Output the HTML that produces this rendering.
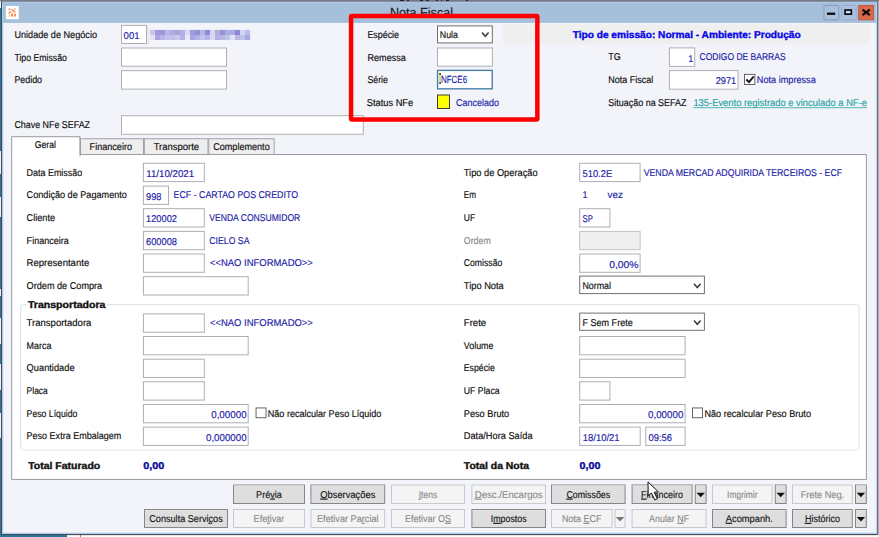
<!DOCTYPE html>
<html lang="pt-BR">
<head>
<meta charset="utf-8">
<title>Nota Fiscal</title>
<style>
html,body{margin:0;padding:0;background:#f2f4fa;overflow:hidden}
body{width:879px;height:537px;position:relative}
svg{display:block;position:absolute;left:0;top:0}
svg text.b{stroke-width:0.35px}
svg text{font-family:'Liberation Sans', Arial, sans-serif;font-size:9.9px;white-space:pre;stroke-width:0.15px;text-rendering:geometricPrecision}
</style>
</head>
<body>
<svg width="879" height="537" viewBox="0 0 879 537" role="img" aria-label="Nota Fiscal">
<rect x="0.00" y="0.00" width="879.00" height="537.00" fill="#f2f4fa" />
<rect x="0.00" y="0.00" width="1.00" height="537.00" fill="#2a7599" />
<rect x="0.00" y="0.00" width="1.00" height="8.00" fill="#eceffa" />
<rect x="0.00" y="151.00" width="1.00" height="23.00" fill="#eceffa" />
<rect x="0.00" y="197.00" width="1.00" height="20.00" fill="#eceffa" />
<rect x="0.00" y="289.00" width="1.00" height="7.00" fill="#eceffa" />
<rect x="0.00" y="318.00" width="1.00" height="26.00" fill="#eceffa" />
<rect x="0.00" y="364.00" width="1.00" height="26.00" fill="#eceffa" />
<rect x="0.00" y="413.00" width="1.00" height="25.00" fill="#eceffa" />
<rect x="1.00" y="1.00" width="877.00" height="534.00" fill="#454a55" />
<rect x="2.00" y="2.00" width="875.00" height="532.00" fill="#b0cdee" />
<rect x="3.00" y="3.00" width="873.00" height="530.00" fill="#dfe6f3" />
<rect x="4.00" y="3.00" width="871.00" height="529.00" fill="#f8f7fc" />
<rect x="5.00" y="3.00" width="870.00" height="528.00" fill="#f2f4fa" />
<rect x="875.00" y="3.00" width="1.00" height="529.00" fill="#eceef8" />
<rect x="876.00" y="2.00" width="1.00" height="532.00" fill="#bcd5f0" />
<rect x="877.00" y="1.00" width="1.00" height="534.00" fill="#66748a" />
<rect x="878.00" y="0.00" width="1.00" height="537.00" fill="#b0aeab" />
<rect x="2.00" y="2.00" width="875.00" height="1.00" fill="#adc8e6" />
<rect x="3.00" y="3.00" width="873.00" height="19.90" fill="#a6c0dc" />
<rect x="0.00" y="0.00" width="879.00" height="1.00" fill="#7a7a7e" />
<rect x="2.00" y="1.00" width="875.00" height="1.00" fill="#7f8fa8" />
<rect x="400.00" y="0.00" width="4.00" height="0.90" fill="#1a1a1a" />
<rect x="407.00" y="0.00" width="2.00" height="0.90" fill="#1a1a1a" />
<rect x="420.00" y="0.00" width="3.00" height="0.90" fill="#1a1a1a" />
<rect x="426.00" y="0.00" width="3.00" height="0.90" fill="#1a1a1a" />
<rect x="436.00" y="0.00" width="2.00" height="0.90" fill="#1a1a1a" />
<rect x="441.00" y="0.00" width="1.00" height="0.90" fill="#1a1a1a" />
<rect x="446.00" y="0.00" width="3.00" height="0.90" fill="#1a1a1a" />
<rect x="466.00" y="0.00" width="2.00" height="0.90" fill="#1a1a1a" />
<rect x="0.00" y="535.00" width="879.00" height="2.00" fill="#2a7599" />
<rect x="67.00" y="535.00" width="812.00" height="1.00" fill="#e8e8e6" />
<rect x="67.00" y="536.00" width="812.00" height="1.00" fill="#ffffff" />
<rect x="80.00" y="535.00" width="0.80" height="2.00" fill="#666" />
<text x="390.00" y="17.30" fill="#1b1b26" stroke="#1b1b26" textLength="63.00" lengthAdjust="spacingAndGlyphs" style="font-size:13.2px">Nota Fiscal</text>
<rect x="5.90" y="6.00" width="12.90" height="13.20" fill="#ffffff" rx="0.8" />
<g fill="#ff6a1a" stroke="#ff6a1a" stroke-linecap="round" opacity="0.92"><circle cx="9.4" cy="9.2" r="0.85" stroke="none"/><circle cx="14.9" cy="9.0" r="0.85" stroke="none" opacity="0.8"/><line x1="12.0" y1="9.7" x2="14.9" y2="11.9" stroke-width="1.3"/><line x1="10.3" y1="11.6" x2="9.2" y2="13.2" stroke-width="1.3"/><circle cx="9.4" cy="15.9" r="0.7" stroke="none" opacity="0.85"/><line x1="12.0" y1="14.1" x2="12.1" y2="16.0" stroke-width="1.7" opacity="0.9"/><line x1="15.0" y1="14.4" x2="15.1" y2="16.0" stroke-width="1.7" opacity="0.9"/><circle cx="12.3" cy="12.6" r="0.6" stroke="none" opacity="0.5"/></g>
<rect x="823.95" y="5.45" width="14.80" height="14.40" fill="#a9c1de" stroke="#7f97b6" stroke-width="0.9" rx="1.2" />
<rect x="827.00" y="12.60" width="8.20" height="2.30" fill="#0a0a0a" />
<rect x="841.75" y="5.45" width="14.40" height="14.40" fill="#a9c1de" stroke="#95abc8" stroke-width="0.9" rx="1.2" />
<rect x="845.05" y="10.05" width="6.30" height="4.10" fill="#cddff3" stroke="#0a0a0a" stroke-width="1.7" />
<rect x="858.75" y="5.45" width="14.80" height="14.40" fill="#d9694c" stroke="#c5502f" stroke-width="0.9" />
<path d="M862.4 9.6 L869.8 15.2 M869.8 9.6 L862.4 15.2" fill="none" stroke="#0a0a0a" stroke-width="2.1" />
<text x="14.40" y="37.90" fill="#0c0c0c" stroke="#0c0c0c" textLength="82.60" lengthAdjust="spacingAndGlyphs">Unidade de Negócio</text>
<text x="14.40" y="60.60" fill="#0c0c0c" stroke="#0c0c0c" textLength="52.50" lengthAdjust="spacingAndGlyphs">Tipo Emissão</text>
<text x="14.40" y="83.20" fill="#0c0c0c" stroke="#0c0c0c" textLength="27.60" lengthAdjust="spacingAndGlyphs">Pedido</text>
<text x="14.40" y="128.20" fill="#0c0c0c" stroke="#0c0c0c" textLength="75.60" lengthAdjust="spacingAndGlyphs">Chave NFe SEFAZ</text>
<rect x="121.50" y="25.40" width="25.00" height="18.10" fill="#ffffff" stroke="#adafb5" stroke-width="1.0" />
<text x="123.60" y="38.90" fill="#1c1ca8" stroke="#1c1ca8" textLength="15.90" lengthAdjust="spacingAndGlyphs">001</text>
<rect x="147.00" y="27.00" width="2.50" height="17.40" fill="#e9e9ef" />
<rect x="150.00" y="29.90" width="5.05" height="5.10" fill="#cbc5ea" />
<rect x="150.00" y="35.00" width="5.05" height="5.00" fill="#e2e0f4" />
<rect x="155.00" y="29.90" width="5.05" height="5.10" fill="#9f98dd" />
<rect x="155.00" y="35.00" width="5.05" height="5.00" fill="#aaa5e0" />
<rect x="160.00" y="29.90" width="5.05" height="5.10" fill="#9f98dd" />
<rect x="160.00" y="35.00" width="5.05" height="5.00" fill="#bab6e5" />
<rect x="165.00" y="29.90" width="5.05" height="5.10" fill="#b9b8e6" />
<rect x="165.00" y="35.00" width="5.05" height="5.00" fill="#c3c2ea" />
<rect x="170.00" y="29.90" width="5.05" height="5.10" fill="#b0aee3" />
<rect x="170.00" y="35.00" width="5.05" height="5.00" fill="#c0c1ea" />
<rect x="175.00" y="29.90" width="5.05" height="5.10" fill="#a9a4e0" />
<rect x="175.00" y="35.00" width="5.05" height="5.00" fill="#cdc9ec" />
<rect x="180.00" y="29.90" width="5.05" height="5.10" fill="#b3b2e5" />
<rect x="180.00" y="35.00" width="5.05" height="5.00" fill="#b0b3e6" />
<rect x="185.00" y="29.90" width="5.05" height="5.10" fill="#dad8f0" />
<rect x="185.00" y="35.00" width="5.05" height="5.00" fill="#e9e8f6" />
<rect x="190.00" y="29.90" width="5.05" height="5.10" fill="#9d9cdc" />
<rect x="190.00" y="35.00" width="5.05" height="5.00" fill="#a8a6e0" />
<rect x="195.00" y="29.90" width="5.05" height="5.10" fill="#958fd9" />
<rect x="195.00" y="35.00" width="5.05" height="5.00" fill="#b5b3e5" />
<rect x="200.00" y="29.90" width="5.05" height="5.10" fill="#b6b5e3" />
<rect x="200.00" y="35.00" width="5.05" height="5.00" fill="#c0c0e9" />
<rect x="205.00" y="29.90" width="5.05" height="5.10" fill="#8a8bdb" />
<rect x="205.00" y="35.00" width="5.05" height="5.00" fill="#b2b5e8" />
<rect x="210.00" y="29.90" width="5.05" height="5.10" fill="#d9d6f0" />
<rect x="210.00" y="35.00" width="5.05" height="5.00" fill="#dad7f0" />
<rect x="215.00" y="29.90" width="5.05" height="5.10" fill="#b1addf" />
<rect x="215.00" y="35.00" width="5.05" height="5.00" fill="#b5b2e3" />
<rect x="220.00" y="29.90" width="5.05" height="5.10" fill="#9893d9" />
<rect x="220.00" y="35.00" width="5.05" height="5.00" fill="#b7b6e5" />
<rect x="225.00" y="29.90" width="5.05" height="5.10" fill="#a9aee4" />
<rect x="225.00" y="35.00" width="5.05" height="5.00" fill="#c0c5ec" />
<rect x="230.00" y="29.90" width="5.05" height="5.10" fill="#aaa7e1" />
<rect x="230.00" y="35.00" width="5.05" height="5.00" fill="#e2e2f5" />
<rect x="235.00" y="29.90" width="5.05" height="5.10" fill="#8e88d8" />
<rect x="235.00" y="35.00" width="5.05" height="5.00" fill="#bcb6e5" />
<rect x="240.00" y="29.90" width="5.05" height="5.10" fill="#d3d3ef" />
<rect x="240.00" y="35.00" width="5.05" height="5.00" fill="#bfc1ea" />
<rect x="245.00" y="29.90" width="5.05" height="5.10" fill="#b5c0ea" />
<rect x="245.00" y="35.00" width="5.05" height="5.00" fill="#a9a8e1" />
<rect x="121.50" y="48.00" width="105.00" height="18.20" fill="#ffffff" stroke="#adafb5" stroke-width="1.0" />
<rect x="121.50" y="70.70" width="105.00" height="18.40" fill="#ffffff" stroke="#adafb5" stroke-width="1.0" />
<rect x="121.50" y="115.70" width="241.80" height="18.60" fill="#ffffff" stroke="#adafb5" stroke-width="1.0" />
<text x="367.40" y="37.90" fill="#0c0c0c" stroke="#0c0c0c" textLength="31.60" lengthAdjust="spacingAndGlyphs">Espécie</text>
<text x="367.40" y="60.60" fill="#0c0c0c" stroke="#0c0c0c" textLength="38.50" lengthAdjust="spacingAndGlyphs">Remessa</text>
<text x="367.40" y="83.20" fill="#0c0c0c" stroke="#0c0c0c" textLength="20.50" lengthAdjust="spacingAndGlyphs">Série</text>
<text x="366.80" y="106.00" fill="#0c0c0c" stroke="#0c0c0c" textLength="46.40" lengthAdjust="spacingAndGlyphs">Status NFe</text>
<rect x="503.00" y="24.60" width="366.80" height="19.60" fill="#efefef" />
<rect x="437.50" y="25.90" width="54.80" height="17.00" fill="#ffffff" stroke="#6f6f6f" stroke-width="1.0" />
<text x="439.80" y="38.00" fill="#0c0c0c" stroke="#0c0c0c" textLength="18.20" lengthAdjust="spacingAndGlyphs">Nula</text>
<path d="M482.0 32.5 L485.3 36.3 L488.6 32.5" fill="none" stroke="#3a3a3a" stroke-width="1.5" />
<rect x="437.50" y="48.00" width="54.90" height="18.20" fill="#ffffff" stroke="#adafb5" stroke-width="1.0" />
<rect x="437.57" y="70.38" width="54.65" height="18.45" fill="#ffffff" stroke="#457dab" stroke-width="1.35" />
<rect x="439.30" y="73.00" width="1.60" height="10.90" fill="#c9d86a" />
<rect x="439.30" y="73.00" width="1.60" height="1.80" fill="#333" />
<rect x="439.30" y="82.20" width="1.60" height="1.70" fill="#333" />
<text x="440.90" y="82.55" fill="#1c1ca8" stroke="#1c1ca8" textLength="26.20" lengthAdjust="spacingAndGlyphs" style="font-size:10.4px">NFCE6</text>
<rect x="436.20" y="93.80" width="14.60" height="15.90" fill="#fbfbfe" />
<rect x="437.50" y="95.00" width="12.00" height="13.50" fill="#ffff00" stroke="#3a3a3a" stroke-width="1.0" />
<text x="455.90" y="105.60" fill="#1c1ca8" stroke="#1c1ca8" textLength="43.00" lengthAdjust="spacingAndGlyphs">Cancelado</text>
<text x="572.70" y="38.00" fill="#0505e6" stroke="#0505e6" textLength="228.00" lengthAdjust="spacingAndGlyphs" font-weight="bold" class="b">Tipo de emissão: Normal - Ambiente: Produção</text>
<text x="608.30" y="60.40" fill="#0c0c0c" stroke="#0c0c0c" textLength="12.50" lengthAdjust="spacingAndGlyphs">TG</text>
<text x="608.30" y="83.00" fill="#0c0c0c" stroke="#0c0c0c" textLength="45.00" lengthAdjust="spacingAndGlyphs">Nota Fiscal</text>
<text x="608.30" y="106.20" fill="#0c0c0c" stroke="#0c0c0c" textLength="78.20" lengthAdjust="spacingAndGlyphs">Situação na SEFAZ</text>
<rect x="669.40" y="47.90" width="25.30" height="18.50" fill="#ffffff" stroke="#adafb5" stroke-width="1.0" />
<text x="693.20" y="61.60" fill="#1c1ca8" stroke="#1c1ca8" textLength="4.95" lengthAdjust="spacingAndGlyphs" text-anchor="end">1</text>
<text x="699.60" y="60.40" fill="#1c1ca8" stroke="#1c1ca8" textLength="86.00" lengthAdjust="spacingAndGlyphs">CODIGO DE BARRAS</text>
<rect x="669.40" y="70.60" width="68.60" height="18.60" fill="#ffffff" stroke="#adafb5" stroke-width="1.0" />
<text x="736.20" y="84.30" fill="#1c1ca8" stroke="#1c1ca8" textLength="20.50" lengthAdjust="spacingAndGlyphs" text-anchor="end">2971</text>
<rect x="744.55" y="74.35" width="10.30" height="10.10" fill="#ffffff" stroke="#555" stroke-width="0.9" />
<path d="M746.3 79.5 L749.1 82.2 L753.6 76.5" fill="none" stroke="#111" stroke-width="1.9" />
<text x="756.80" y="82.90" fill="#1c1ca8" stroke="#1c1ca8" textLength="59.00" lengthAdjust="spacingAndGlyphs">Nota impressa</text>
<text x="693.40" y="106.20" fill="#27a3a3" stroke="#27a3a3" textLength="173.60" lengthAdjust="spacingAndGlyphs">135-Evento registrado e vinculado a NF-e</text>
<line x1="693.40" y1="107.70" x2="867.00" y2="107.70" stroke="#27a3a3" stroke-width="0.8" />
<rect x="11.70" y="154.50" width="854.70" height="324.90" fill="#ffffff" stroke="#979aa3" stroke-width="1.0" />
<rect x="80.45" y="138.75" width="63.00" height="15.70" fill="#eeeeee" stroke="#979aa3" stroke-width="0.9" />
<text x="89.60" y="150.10" fill="#0c0c0c" stroke="#0c0c0c" textLength="42.40" lengthAdjust="spacingAndGlyphs">Financeiro</text>
<rect x="144.35" y="138.75" width="63.60" height="15.70" fill="#eeeeee" stroke="#979aa3" stroke-width="0.9" />
<text x="153.70" y="150.10" fill="#0c0c0c" stroke="#0c0c0c" textLength="45.40" lengthAdjust="spacingAndGlyphs">Transporte</text>
<rect x="208.85" y="138.75" width="65.30" height="15.70" fill="#eeeeee" stroke="#979aa3" stroke-width="0.9" />
<text x="213.20" y="150.10" fill="#0c0c0c" stroke="#0c0c0c" textLength="56.50" lengthAdjust="spacingAndGlyphs">Complemento</text>
<rect x="11.70" y="136.70" width="68.20" height="19.30" fill="#ffffff" stroke="#979aa3" stroke-width="1.0" />
<rect x="12.20" y="153.80" width="67.20" height="3.40" fill="#ffffff" />
<text x="34.70" y="148.40" fill="#0c0c0c" stroke="#0c0c0c" textLength="21.30" lengthAdjust="spacingAndGlyphs">Geral</text>
<text x="26.60" y="175.50" fill="#0c0c0c" stroke="#0c0c0c" textLength="55.60" lengthAdjust="spacingAndGlyphs">Data Emissão</text>
<text x="26.60" y="198.30" fill="#0c0c0c" stroke="#0c0c0c" textLength="100.30" lengthAdjust="spacingAndGlyphs">Condição de Pagamento</text>
<text x="26.60" y="220.90" fill="#0c0c0c" stroke="#0c0c0c" textLength="28.40" lengthAdjust="spacingAndGlyphs">Cliente</text>
<text x="26.60" y="243.60" fill="#0c0c0c" stroke="#0c0c0c" textLength="42.30" lengthAdjust="spacingAndGlyphs">Financeira</text>
<text x="26.60" y="266.20" fill="#0c0c0c" stroke="#0c0c0c" textLength="62.60" lengthAdjust="spacingAndGlyphs">Representante</text>
<text x="26.60" y="288.90" fill="#0c0c0c" stroke="#0c0c0c" textLength="75.60" lengthAdjust="spacingAndGlyphs">Ordem de Compra</text>
<rect x="143.40" y="163.30" width="60.90" height="18.30" fill="#ffffff" stroke="#adafb5" stroke-width="1.0" />
<text x="146.20" y="176.80" fill="#1c1ca8" stroke="#1c1ca8" textLength="48.00" lengthAdjust="spacingAndGlyphs">11/10/2021</text>
<rect x="143.40" y="186.10" width="25.10" height="18.30" fill="#ffffff" stroke="#adafb5" stroke-width="1.0" />
<text x="146.00" y="199.60" fill="#1c1ca8" stroke="#1c1ca8" textLength="15.40" lengthAdjust="spacingAndGlyphs">998</text>
<text x="173.60" y="198.30" fill="#1c1ca8" stroke="#1c1ca8" textLength="124.40" lengthAdjust="spacingAndGlyphs">ECF - CARTAO POS CREDITO</text>
<rect x="143.40" y="208.70" width="60.90" height="18.30" fill="#ffffff" stroke="#adafb5" stroke-width="1.0" />
<text x="146.00" y="222.20" fill="#1c1ca8" stroke="#1c1ca8" textLength="31.00" lengthAdjust="spacingAndGlyphs">120002</text>
<text x="209.30" y="220.90" fill="#1c1ca8" stroke="#1c1ca8" textLength="91.00" lengthAdjust="spacingAndGlyphs">VENDA CONSUMIDOR</text>
<rect x="143.40" y="231.40" width="60.90" height="18.30" fill="#ffffff" stroke="#adafb5" stroke-width="1.0" />
<text x="146.00" y="244.90" fill="#1c1ca8" stroke="#1c1ca8" textLength="31.00" lengthAdjust="spacingAndGlyphs">600008</text>
<text x="209.30" y="243.60" fill="#1c1ca8" stroke="#1c1ca8" textLength="40.20" lengthAdjust="spacingAndGlyphs">CIELO SA</text>
<rect x="143.40" y="254.00" width="60.90" height="18.30" fill="#ffffff" stroke="#adafb5" stroke-width="1.0" />
<text x="209.90" y="266.20" fill="#1c1ca8" stroke="#1c1ca8" textLength="103.00" lengthAdjust="spacingAndGlyphs">&lt;&lt;NAO INFORMADO&gt;&gt;</text>
<rect x="143.40" y="276.70" width="104.80" height="18.30" fill="#ffffff" stroke="#adafb5" stroke-width="1.0" />
<text x="463.80" y="175.50" fill="#0c0c0c" stroke="#0c0c0c" textLength="73.80" lengthAdjust="spacingAndGlyphs">Tipo de Operação</text>
<text x="463.80" y="198.30" fill="#0c0c0c" stroke="#0c0c0c" textLength="12.30" lengthAdjust="spacingAndGlyphs">Em</text>
<text x="463.80" y="220.90" fill="#0c0c0c" stroke="#0c0c0c" textLength="11.40" lengthAdjust="spacingAndGlyphs">UF</text>
<text x="463.80" y="243.60" fill="#8a8a8a" stroke="#8a8a8a" textLength="27.00" lengthAdjust="spacingAndGlyphs">Ordem</text>
<text x="463.80" y="266.20" fill="#0c0c0c" stroke="#0c0c0c" textLength="38.50" lengthAdjust="spacingAndGlyphs">Comissão</text>
<text x="463.80" y="288.90" fill="#0c0c0c" stroke="#0c0c0c" textLength="40.00" lengthAdjust="spacingAndGlyphs">Tipo Nota</text>
<rect x="579.70" y="163.30" width="60.40" height="18.30" fill="#ffffff" stroke="#adafb5" stroke-width="1.0" />
<text x="582.60" y="176.80" fill="#1c1ca8" stroke="#1c1ca8" textLength="29.50" lengthAdjust="spacingAndGlyphs">510.2E</text>
<text x="643.70" y="175.50" fill="#1c1ca8" stroke="#1c1ca8" textLength="198.40" lengthAdjust="spacingAndGlyphs">VENDA MERCAD ADQUIRIDA TERCEIROS - ECF</text>
<text x="582.60" y="198.30" fill="#1c1ca8" stroke="#1c1ca8" textLength="4.95" lengthAdjust="spacingAndGlyphs">1</text>
<text x="607.60" y="198.30" fill="#1c1ca8" stroke="#1c1ca8" textLength="15.40" lengthAdjust="spacingAndGlyphs">vez</text>
<rect x="579.70" y="208.70" width="30.20" height="18.30" fill="#ffffff" stroke="#adafb5" stroke-width="1.0" />
<text x="582.60" y="222.20" fill="#1c1ca8" stroke="#1c1ca8" textLength="10.30" lengthAdjust="spacingAndGlyphs">SP</text>
<rect x="579.70" y="231.40" width="60.40" height="18.30" fill="#efefef" stroke="#c4c4c4" stroke-width="1.0" />
<rect x="579.70" y="254.00" width="60.40" height="18.30" fill="#ffffff" stroke="#adafb5" stroke-width="1.0" />
<text x="638.60" y="267.50" fill="#1c1ca8" stroke="#1c1ca8" textLength="29.40" lengthAdjust="spacingAndGlyphs" text-anchor="end">0,00%</text>
<rect x="579.70" y="276.10" width="124.70" height="17.50" fill="#ffffff" stroke="#707070" stroke-width="1.0" />
<text x="582.40" y="288.90" fill="#0c0c0c" stroke="#0c0c0c" textLength="28.50" lengthAdjust="spacingAndGlyphs">Normal</text>
<path d="M694.0 283.8 L697.3 287.6 L700.6 283.8" fill="none" stroke="#3a3a3a" stroke-width="1.5" />
<rect x="20.65" y="304.65" width="838.50" height="145.50" fill="none" stroke="#d8dfe8" stroke-width="0.9" rx="2.5" />
<rect x="26.50" y="299.00" width="80.50" height="11.00" fill="#ffffff" />
<text x="27.90" y="308.00" fill="#111" stroke="#111" textLength="77.60" lengthAdjust="spacingAndGlyphs" font-weight="bold" class="b">Transportadora</text>
<text x="26.60" y="326.10" fill="#0c0c0c" stroke="#0c0c0c" textLength="64.80" lengthAdjust="spacingAndGlyphs">Transportadora</text>
<text x="26.60" y="348.70" fill="#0c0c0c" stroke="#0c0c0c" textLength="24.80" lengthAdjust="spacingAndGlyphs">Marca</text>
<text x="26.60" y="371.40" fill="#0c0c0c" stroke="#0c0c0c" textLength="48.00" lengthAdjust="spacingAndGlyphs">Quantidade</text>
<text x="26.60" y="394.00" fill="#0c0c0c" stroke="#0c0c0c" textLength="21.20" lengthAdjust="spacingAndGlyphs">Placa</text>
<text x="26.60" y="416.70" fill="#0c0c0c" stroke="#0c0c0c" textLength="50.80" lengthAdjust="spacingAndGlyphs">Peso Líquido</text>
<text x="26.60" y="439.30" fill="#0c0c0c" stroke="#0c0c0c" textLength="94.60" lengthAdjust="spacingAndGlyphs">Peso Extra Embalagem</text>
<rect x="143.40" y="313.90" width="60.90" height="18.30" fill="#ffffff" stroke="#adafb5" stroke-width="1.0" />
<text x="209.90" y="326.10" fill="#1c1ca8" stroke="#1c1ca8" textLength="103.00" lengthAdjust="spacingAndGlyphs">&lt;&lt;NAO INFORMADO&gt;&gt;</text>
<rect x="143.40" y="336.50" width="104.80" height="18.30" fill="#ffffff" stroke="#adafb5" stroke-width="1.0" />
<rect x="143.40" y="359.20" width="60.90" height="18.30" fill="#ffffff" stroke="#adafb5" stroke-width="1.0" />
<rect x="143.40" y="381.80" width="60.90" height="18.30" fill="#ffffff" stroke="#adafb5" stroke-width="1.0" />
<rect x="143.40" y="404.50" width="104.80" height="18.30" fill="#ffffff" stroke="#adafb5" stroke-width="1.0" />
<text x="246.60" y="418.00" fill="#1c1ca8" stroke="#1c1ca8" textLength="35.40" lengthAdjust="spacingAndGlyphs" text-anchor="end">0,00000</text>
<rect x="143.40" y="427.10" width="104.80" height="18.30" fill="#ffffff" stroke="#adafb5" stroke-width="1.0" />
<text x="246.60" y="440.60" fill="#1c1ca8" stroke="#1c1ca8" textLength="40.60" lengthAdjust="spacingAndGlyphs" text-anchor="end">0,000000</text>
<rect x="256.05" y="407.95" width="10.00" height="9.80" fill="#ffffff" stroke="#555" stroke-width="0.9" />
<text x="267.80" y="416.70" fill="#0c0c0c" stroke="#0c0c0c" textLength="113.60" lengthAdjust="spacingAndGlyphs">Não recalcular Peso Líquido</text>
<text x="463.80" y="326.10" fill="#0c0c0c" stroke="#0c0c0c" textLength="22.40" lengthAdjust="spacingAndGlyphs">Frete</text>
<text x="463.80" y="348.70" fill="#0c0c0c" stroke="#0c0c0c" textLength="29.60" lengthAdjust="spacingAndGlyphs">Volume</text>
<text x="463.80" y="371.40" fill="#0c0c0c" stroke="#0c0c0c" textLength="31.00" lengthAdjust="spacingAndGlyphs">Espécie</text>
<text x="463.80" y="394.00" fill="#0c0c0c" stroke="#0c0c0c" textLength="35.80" lengthAdjust="spacingAndGlyphs">UF Placa</text>
<text x="463.80" y="416.70" fill="#0c0c0c" stroke="#0c0c0c" textLength="45.40" lengthAdjust="spacingAndGlyphs">Peso Bruto</text>
<text x="463.80" y="439.30" fill="#0c0c0c" stroke="#0c0c0c" textLength="68.80" lengthAdjust="spacingAndGlyphs">Data/Hora Saída</text>
<rect x="579.70" y="313.10" width="124.70" height="17.20" fill="#ffffff" stroke="#707070" stroke-width="1.0" />
<text x="582.40" y="326.10" fill="#0c0c0c" stroke="#0c0c0c" textLength="50.40" lengthAdjust="spacingAndGlyphs">F Sem Frete</text>
<path d="M694.0 320.5 L697.3 324.3 L700.6 320.5" fill="none" stroke="#3a3a3a" stroke-width="1.5" />
<rect x="579.70" y="336.50" width="105.40" height="18.30" fill="#ffffff" stroke="#adafb5" stroke-width="1.0" />
<rect x="579.70" y="359.20" width="105.40" height="18.30" fill="#ffffff" stroke="#adafb5" stroke-width="1.0" />
<rect x="579.70" y="381.80" width="30.20" height="18.30" fill="#ffffff" stroke="#adafb5" stroke-width="1.0" />
<rect x="579.70" y="404.50" width="105.40" height="18.30" fill="#ffffff" stroke="#adafb5" stroke-width="1.0" />
<text x="683.40" y="418.00" fill="#1c1ca8" stroke="#1c1ca8" textLength="35.40" lengthAdjust="spacingAndGlyphs" text-anchor="end">0,00000</text>
<rect x="579.70" y="427.10" width="60.50" height="18.30" fill="#ffffff" stroke="#adafb5" stroke-width="1.0" />
<text x="582.80" y="440.60" fill="#1c1ca8" stroke="#1c1ca8" textLength="36.80" lengthAdjust="spacingAndGlyphs">18/10/21</text>
<rect x="645.80" y="427.10" width="39.30" height="18.30" fill="#ffffff" stroke="#adafb5" stroke-width="1.0" />
<text x="648.40" y="440.60" fill="#1c1ca8" stroke="#1c1ca8" textLength="23.60" lengthAdjust="spacingAndGlyphs">09:56</text>
<rect x="692.45" y="407.95" width="10.10" height="9.80" fill="#ffffff" stroke="#555" stroke-width="0.9" />
<text x="704.40" y="416.70" fill="#0c0c0c" stroke="#0c0c0c" textLength="106.60" lengthAdjust="spacingAndGlyphs">Não recalcular Peso Bruto</text>
<text x="28.20" y="468.80" fill="#111" stroke="#111" textLength="72.00" lengthAdjust="spacingAndGlyphs" font-weight="bold" class="b">Total Faturado</text>
<text x="143.20" y="468.80" fill="#0a0a96" stroke="#0a0a96" textLength="21.00" lengthAdjust="spacingAndGlyphs" font-weight="bold" class="b">0,00</text>
<text x="463.80" y="468.80" fill="#111" stroke="#111" textLength="65.20" lengthAdjust="spacingAndGlyphs" font-weight="bold" class="b">Total da Nota</text>
<text x="579.40" y="468.80" fill="#0a0a96" stroke="#0a0a96" textLength="21.00" lengthAdjust="spacingAndGlyphs" font-weight="bold" class="b">0,00</text>
<rect x="233.50" y="485.00" width="71.00" height="18.50" fill="#dedede" stroke="#868686" stroke-width="1.0" />
<rect x="234.00" y="485.50" width="70.00" height="1.00" fill="#e6e6e6" />
<text x="269.00" y="497.65" fill="#151515" stroke="#151515" textLength="25.80" lengthAdjust="spacingAndGlyphs" text-anchor="middle">Pré<tspan text-decoration="underline">v</tspan>ia</text>
<rect x="310.90" y="485.00" width="73.80" height="18.50" fill="#dedede" stroke="#868686" stroke-width="1.0" />
<rect x="311.40" y="485.50" width="72.80" height="1.00" fill="#e6e6e6" />
<text x="347.80" y="497.65" fill="#151515" stroke="#151515" textLength="55.00" lengthAdjust="spacingAndGlyphs" text-anchor="middle"><tspan text-decoration="underline">O</tspan>bservações</text>
<rect x="391.50" y="485.00" width="73.00" height="18.50" fill="#f4f4f4" stroke="#c6c9ce" stroke-width="1.0" />
<text x="428.00" y="497.65" fill="#8b8b8b" stroke="#8b8b8b" textLength="18.50" lengthAdjust="spacingAndGlyphs" text-anchor="middle"><tspan text-decoration="underline">I</tspan>tens</text>
<rect x="471.90" y="485.00" width="73.60" height="18.50" fill="#f4f4f4" stroke="#c6c9ce" stroke-width="1.0" />
<text x="508.70" y="497.65" fill="#8b8b8b" stroke="#8b8b8b" textLength="68.00" lengthAdjust="spacingAndGlyphs" text-anchor="middle"><tspan text-decoration="underline">D</tspan>esc./Encargos</text>
<rect x="551.50" y="485.00" width="73.60" height="18.50" fill="#dedede" stroke="#868686" stroke-width="1.0" />
<rect x="552.00" y="485.50" width="72.60" height="1.00" fill="#e6e6e6" />
<text x="588.30" y="497.65" fill="#151515" stroke="#151515" textLength="43.80" lengthAdjust="spacingAndGlyphs" text-anchor="middle"><tspan text-decoration="underline">C</tspan>omissões</text>
<rect x="632.10" y="485.00" width="60.00" height="18.50" fill="#dedede" stroke="#868686" stroke-width="1.0" />
<rect x="632.60" y="485.50" width="59.00" height="1.00" fill="#e6e6e6" />
<text x="662.10" y="497.65" fill="#151515" stroke="#151515" textLength="42.00" lengthAdjust="spacingAndGlyphs" text-anchor="middle"><tspan text-decoration="underline">F</tspan>inanceiro</text>
<rect x="695.30" y="485.00" width="10.80" height="18.50" fill="#dedede" stroke="#868686" stroke-width="1.0" />
<rect x="695.80" y="485.50" width="9.80" height="1.00" fill="#e6e6e6" />
<path d="M696.50 492.85 L704.90 492.85 L700.70 497.35 Z" fill="#111" />
<rect x="712.50" y="485.00" width="59.60" height="18.50" fill="#f4f4f4" stroke="#c6c9ce" stroke-width="1.0" />
<text x="742.30" y="497.65" fill="#8b8b8b" stroke="#8b8b8b" textLength="30.50" lengthAdjust="spacingAndGlyphs" text-anchor="middle">Im<tspan text-decoration="underline">p</tspan>rimir</text>
<rect x="775.30" y="485.00" width="10.80" height="18.50" fill="#dedede" stroke="#868686" stroke-width="1.0" />
<rect x="775.80" y="485.50" width="9.80" height="1.00" fill="#e6e6e6" />
<path d="M776.50 492.85 L784.90 492.85 L780.70 497.35 Z" fill="#111" />
<rect x="792.50" y="485.00" width="59.80" height="18.50" fill="#f4f4f4" stroke="#c6c9ce" stroke-width="1.0" />
<text x="822.40" y="497.65" fill="#8b8b8b" stroke="#8b8b8b" textLength="43.50" lengthAdjust="spacingAndGlyphs" text-anchor="middle">Frete Ne<tspan text-decoration="underline">g</tspan>.</text>
<rect x="855.50" y="485.00" width="10.80" height="18.50" fill="#dedede" stroke="#868686" stroke-width="1.0" />
<rect x="856.00" y="485.50" width="9.80" height="1.00" fill="#e6e6e6" />
<path d="M856.70 492.85 L865.10 492.85 L860.90 497.35 Z" fill="#111" />
<rect x="144.50" y="509.50" width="83.00" height="18.00" fill="#dedede" stroke="#868686" stroke-width="1.0" />
<rect x="145.00" y="510.00" width="82.00" height="1.00" fill="#e6e6e6" />
<text x="186.00" y="521.90" fill="#151515" stroke="#151515" textLength="73.50" lengthAdjust="spacingAndGlyphs" text-anchor="middle">Consulta Servi<tspan text-decoration="underline">ç</tspan>os</text>
<rect x="233.50" y="509.50" width="71.00" height="18.00" fill="#f4f4f4" stroke="#c6c9ce" stroke-width="1.0" />
<text x="269.00" y="521.90" fill="#8b8b8b" stroke="#8b8b8b" textLength="30.80" lengthAdjust="spacingAndGlyphs" text-anchor="middle">Efe<tspan text-decoration="underline">t</tspan>ivar</text>
<rect x="310.90" y="509.50" width="73.80" height="18.00" fill="#f4f4f4" stroke="#c6c9ce" stroke-width="1.0" />
<text x="347.80" y="521.90" fill="#8b8b8b" stroke="#8b8b8b" textLength="61.60" lengthAdjust="spacingAndGlyphs" text-anchor="middle">Efetivar Pa<tspan text-decoration="underline">r</tspan>cial</text>
<rect x="391.50" y="509.50" width="73.00" height="18.00" fill="#f4f4f4" stroke="#c6c9ce" stroke-width="1.0" />
<text x="428.00" y="521.90" fill="#8b8b8b" stroke="#8b8b8b" textLength="46.00" lengthAdjust="spacingAndGlyphs" text-anchor="middle">Efetivar O<tspan text-decoration="underline">S</tspan></text>
<rect x="471.90" y="509.50" width="73.60" height="18.00" fill="#dedede" stroke="#868686" stroke-width="1.0" />
<rect x="472.40" y="510.00" width="72.60" height="1.00" fill="#e6e6e6" />
<text x="508.70" y="521.90" fill="#151515" stroke="#151515" textLength="35.80" lengthAdjust="spacingAndGlyphs" text-anchor="middle">I<tspan text-decoration="underline">m</tspan>postos</text>
<rect x="551.50" y="509.50" width="60.60" height="18.00" fill="#f4f4f4" stroke="#c6c9ce" stroke-width="1.0" />
<text x="581.80" y="521.90" fill="#8b8b8b" stroke="#8b8b8b" textLength="39.50" lengthAdjust="spacingAndGlyphs" text-anchor="middle">Nota <tspan text-decoration="underline">E</tspan>CF</text>
<rect x="615.10" y="509.50" width="10.00" height="18.00" fill="#f4f4f4" stroke="#c6c9ce" stroke-width="1.0" />
<path d="M615.90 517.10 L624.30 517.10 L620.10 521.60 Z" fill="#777" />
<rect x="632.10" y="509.50" width="74.00" height="18.00" fill="#f4f4f4" stroke="#c6c9ce" stroke-width="1.0" />
<text x="669.10" y="521.90" fill="#8b8b8b" stroke="#8b8b8b" textLength="40.00" lengthAdjust="spacingAndGlyphs" text-anchor="middle">Anular <tspan text-decoration="underline">N</tspan>F</text>
<rect x="712.50" y="509.50" width="73.60" height="18.00" fill="#dedede" stroke="#868686" stroke-width="1.0" />
<rect x="713.00" y="510.00" width="72.60" height="1.00" fill="#e6e6e6" />
<text x="749.30" y="521.90" fill="#151515" stroke="#151515" textLength="47.00" lengthAdjust="spacingAndGlyphs" text-anchor="middle"><tspan text-decoration="underline">A</tspan>companh.</text>
<rect x="792.50" y="509.50" width="59.80" height="18.00" fill="#dedede" stroke="#868686" stroke-width="1.0" />
<rect x="793.00" y="510.00" width="58.80" height="1.00" fill="#e6e6e6" />
<text x="822.40" y="521.90" fill="#151515" stroke="#151515" textLength="35.00" lengthAdjust="spacingAndGlyphs" text-anchor="middle"><tspan text-decoration="underline">H</tspan>istórico</text>
<rect x="855.50" y="509.50" width="10.80" height="18.00" fill="#dedede" stroke="#868686" stroke-width="1.0" />
<rect x="856.00" y="510.00" width="9.80" height="1.00" fill="#e6e6e6" />
<path d="M856.70 517.10 L865.10 517.10 L860.90 521.60 Z" fill="#111" />
<rect x="351.05" y="16.05" width="186.30" height="103.50" fill="none" stroke="#ff0000" stroke-width="4.5" rx="1.0" />
<path d="M648.0 481.9 L648.2 495.9 L651.4 493.0 L654.8 500.0 L657.4 498.9 L654.2 492.2 L658.4 491.9 Z" fill="#ffffff" stroke="#111" stroke-width="1.0" stroke-linejoin="round"/>
</svg>
</body>
</html>
